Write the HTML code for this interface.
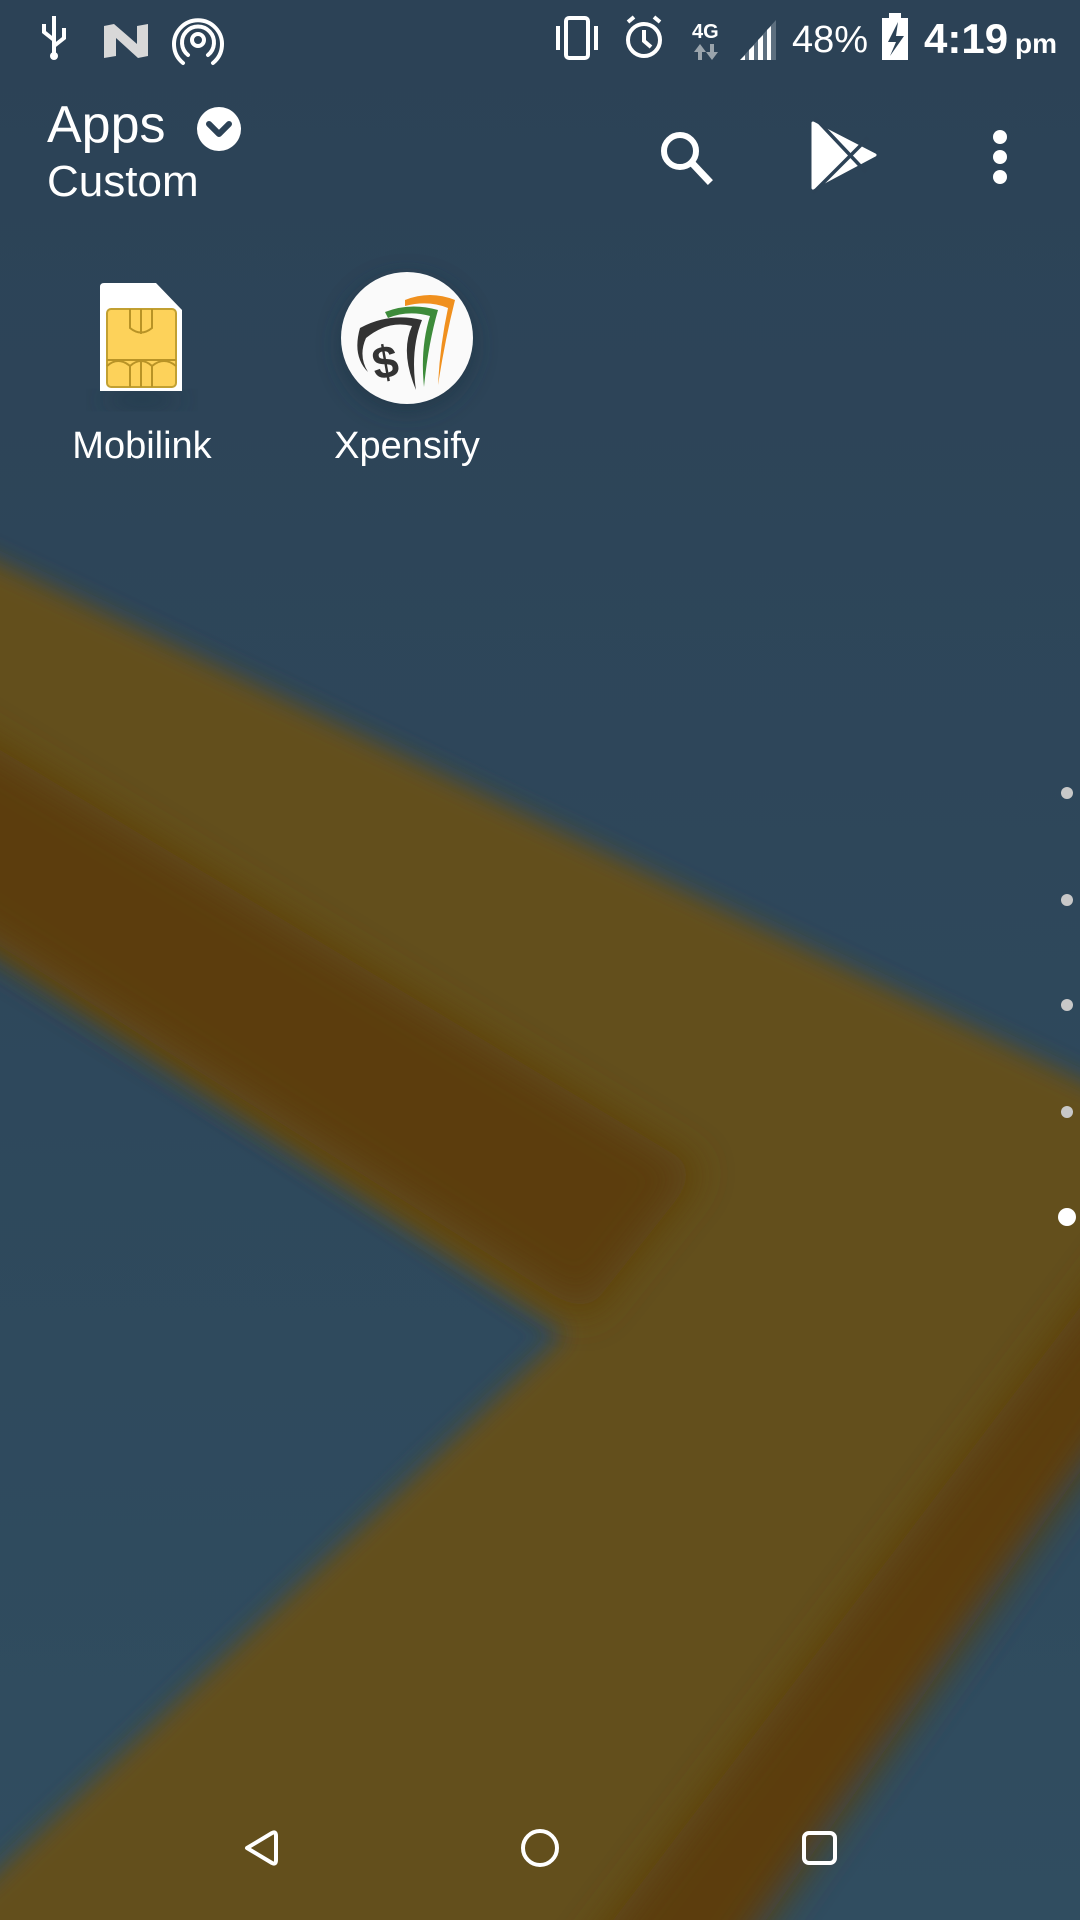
<!DOCTYPE html>
<html><head><meta charset="utf-8"><style>
html,body{margin:0;padding:0;width:1080px;height:1920px;overflow:hidden;background:#2d4357;font-family:"Liberation Sans",sans-serif;color:#fff}
svg{display:block;position:absolute;left:0;top:0}
</style></head><body>
<svg width="1080" height="1920" viewBox="0 0 1080 1920" overflow="hidden">
<defs>
<linearGradient id="bg" x1="0" y1="0" x2="0" y2="1"><stop offset="0" stop-color="#2c4256"/><stop offset="1" stop-color="#304d60"/></linearGradient>
<filter id="bl" x="-20%" y="-20%" width="140%" height="140%"><feGaussianBlur stdDeviation="12"/></filter>
<filter id="bl2" x="-20%" y="-20%" width="140%" height="140%"><feGaussianBlur stdDeviation="20"/></filter>
<clipPath id="cp"><rect width="1080" height="1920"/></clipPath>
</defs>
<rect width="1080" height="1920" fill="url(#bg)"/>
<g clip-path="url(#cp)">
<polygon filter="url(#bl)" fill="#644f1a" points="-200,467 1300,1185 1300,1300 1180,1300 717,1920 717,2100 -200,2100 -200,2060 565,1333 -200,820"/>
<polygon filter="url(#bl2)" fill="#5b3d0f" points="-200,630 700,1170 585,1315 -200,820"/>
<polygon filter="url(#bl2)" fill="#5b3d0f" points="1200,1150 1200,1300 717,1990 560,1990"/>
</g>
<g fill="#c8c8c8"><circle cx="1067" cy="793" r="6"/><circle cx="1067" cy="900" r="6"/><circle cx="1067" cy="1005" r="6"/><circle cx="1067" cy="1112" r="6"/></g>
<circle cx="1067" cy="1217" r="9" fill="#fff"/>
<path d="M247 1848 L272 1833 Q276 1831 276 1836 L276 1860 Q276 1865 272 1863 Z" fill="none" stroke="#fff" stroke-width="4" stroke-linejoin="round"/>
<circle cx="540" cy="1848" r="17" fill="none" stroke="#fff" stroke-width="4"/>
<rect x="804" y="1833" width="31" height="30" rx="5" fill="none" stroke="#fff" stroke-width="4"/>
<g fill="none" stroke="#fff" stroke-width="4">
<path d="M54 16 V58 M54 40 L44 32 V24 M54 46 L64 38 V28"/>
</g>
<circle cx="54" cy="56" r="4" fill="#fff"/>
<path d="M104 26 L114 24 L137 44 L137 26 L148 24 L148 56 L138 58 L116 38 L116 56 L104 58 Z" fill="#d8d8d8"/>
<g fill="none" stroke="#fff" stroke-width="4" stroke-linecap="round">
<circle cx="198" cy="40" r="6"/>
<path d="M188 55 A16 16 0 1 1 208 55"/>
<path d="M183 63 A24 24 0 1 1 213 63"/>
</g>
<g fill="none" stroke="#fff" stroke-width="4">
<rect x="566" y="18" width="22" height="40" rx="3"/>
<path d="M558 26 V50 M596 26 V50"/>
<circle cx="644" cy="40" r="16"/>
<path d="M644 30 V41 L651 47 M628 22 L634 17 M660 22 L654 17"/>
</g>
<text x="692" y="38" font-size="20" font-weight="bold" fill="#fff">4G</text>
<path d="M700 44 L706 52 H702 V60 H698 V52 H694 Z M712 60 L718 52 H714 V44 H710 V52 H706 Z" fill="#9aa4ac"/>
<path d="M740 60 L776 20 V60 Z" fill="#5d6f7f"/>
<path d="M740 60 L745 55 V60 Z M749 60 V50 L754 45 V60 Z M758 60 V40 L763 35 V60 Z M767 60 V30 L771 26 V60 Z" fill="#fff"/>
<text x="792" y="52" font-size="38" fill="#fff">48%</text>
<rect x="882" y="18" width="26" height="42" fill="#fff"/>
<rect x="889" y="13" width="12" height="6" fill="#fff"/>
<path d="M898 22 L888 42 H896 L890 56 L904 36 H896 Z" fill="#2c4256"/>
<text x="924" y="53" font-size="42" font-weight="bold" fill="#fff">4:19</text>
<text x="1015" y="53" font-size="28" font-weight="bold" fill="#fff">pm</text>
<text x="47" y="142" font-size="52" fill="#fff">Apps</text>
<text x="47" y="196" font-size="44" fill="#fff">Custom</text>
<circle cx="219" cy="129" r="22" fill="#fff"/>
<path d="M209 124 L219 134 L229 124" fill="none" stroke="#2c4256" stroke-width="6" stroke-linecap="round" stroke-linejoin="round"/>
<circle cx="680" cy="151" r="16" fill="none" stroke="#fff" stroke-width="6"/>
<path d="M692 163 L708 180" stroke="#fff" stroke-width="7" stroke-linecap="square"/>
<path d="M813 123 L875 155 L813 188 Z" fill="#fff" stroke="#fff" stroke-width="3" stroke-linejoin="round"/>
<path d="M815 118 L866 172 M813 193 L868 138" stroke="#2c4256" stroke-width="3.5"/>
<circle cx="1000" cy="137" r="7" fill="#fff"/><circle cx="1000" cy="157" r="7" fill="#fff"/><circle cx="1000" cy="177" r="7" fill="#fff"/>
<ellipse cx="142" cy="400" rx="40" ry="8" fill="#1f3040" opacity="0.5" filter="url(#bl)"/>
<path d="M104 283 H156 L182 310 V391 H100 V287 Q100 283 104 283 Z" fill="#fff"/>
<rect x="107" y="309" width="69" height="78" rx="4" fill="#fdd25a" stroke="#c2a031" stroke-width="2"/>
<g fill="none" stroke="#b89326" stroke-width="2">
<path d="M130 309 V328 Q141 337 152 328 V309 M141 309 V334"/>
<path d="M107 360 H176 M130 387 V366 Q141 356 152 366 V387 M141 360 V387 M107 366 Q118 356 130 366 M152 366 Q164 356 176 366"/>
</g>
<circle cx="407" cy="345" r="66" fill="#1f3040" opacity="0.6" filter="url(#bl)"/>
<circle cx="407" cy="338" r="66" fill="#fafafa"/>
<path d="M405 300 Q430 290 455 300 Q445 340 438 385 Q440 345 448 308 Q428 300 405 306 Z" fill="#f0901e"/>
<path d="M385 312 Q410 302 438 310 Q428 345 424 387 Q420 348 430 316 Q408 310 388 318 Z" fill="#3d8b3a"/>
<path d="M360 328 Q390 312 422 320 Q410 350 416 390 Q400 352 412 326 Q388 320 366 338 Q358 356 368 372 Q352 356 360 328 Z" fill="#333"/>
<text x="372" y="378" font-size="46" font-weight="bold" fill="#333" transform="rotate(-10 385 360)">$</text>
<text x="142" y="458" font-size="38" text-anchor="middle" fill="#fff">Mobilink</text>
<text x="407" y="458" font-size="38" text-anchor="middle" fill="#fff">Xpensify</text>
</svg>
</body></html>
